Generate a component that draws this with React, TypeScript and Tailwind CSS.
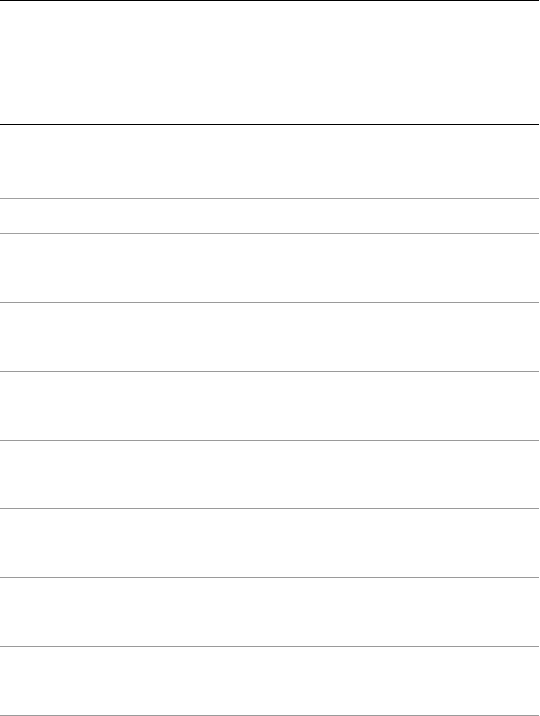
export default function App() {
  const rows = Array.from({ length: 7 });
  return (
    <div className="w-[539px] bg-white font-['Liberation_Sans',sans-serif]">
      <div className="h-[125px] border-y border-black" />
      <div className="h-[74px] border-b border-[#a0a0a0]" />
      <div className="h-[35px] border-b border-[#a0a0a0]" />
      {rows.map((_, i) => (
        <div key={i} className="h-[68.86px] border-b border-[#9a9a9a]" />
      ))}
    </div>
  );
}
